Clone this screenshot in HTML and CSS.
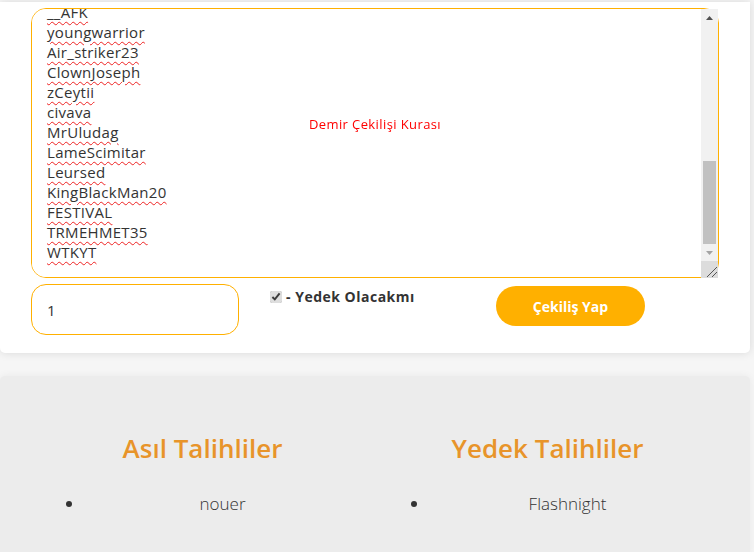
FILE: index.html
```html
<!DOCTYPE html>
<html lang="tr">
<head>
    <meta charset="UTF-8">
    <meta name="viewport" content="width=device-width, initial-scale=1.0">
    <title>Çekiliş</title>
    <link rel="stylesheet" href="styles.css">
</head>
<body>
    <div class="draw-card">
        <div class="pool">
            <textarea id="names" class="names" spellcheck="false">Kaanbey
EfeCan07
xSerhatTR
BlackWolf
Dragon_Slayer
MertKral
Ahmet_34
TheKing55
Sultan_Hero
Cozmo
ArdaPlays
nouer
Flashnight
ZeynepYT
Barisss
kuzeykurt
Yusuf_61
NightHawk
CrazyFox
Emirhan16
RedBlade
__AFK
youngwarrior
Air_striker23
ClownJoseph
zCeytii
civava
MrUludag
LameScimitar
Leursed
KingBlackMan20
FESTIVAL
TRMEHMET35
WTKYT</textarea>
            <span class="pool-title">Demir Çekilişi Kurası</span>
            <!-- scrollbar drawn by hand -->
            <div class="scrollbar">
                <div class="sb-btn">
                    <svg width="7" height="4" viewBox="0 0 7 4"><polygon points="0,4 3.5,0 7,4" fill="#505050"/></svg>
                </div>
                <div class="sb-track">
                    <div class="sb-thumb"></div>
                </div>
                <div class="sb-btn">
                    <svg width="7" height="4" viewBox="0 0 7 4"><polygon points="0,0 7,0 3.5,4" fill="#a3a3a3"/></svg>
                </div>
                <div class="sb-resize">
                    <svg width="17" height="17" viewBox="0 0 17 17"><path d="M6 16 L16 6 M11 16 L16 11" stroke="#555" stroke-width="1" fill="none"/></svg>
                </div>
            </div>
        </div>
        <div class="controls">
            <div class="control">
                <input type="text" class="count" value="1">
            </div>
            <div class="control">
                <label class="backup">
                    <input type="checkbox" checked> - Yedek Olacakmı
                </label>
            </div>
            <div class="control">
                <button class="draw-btn">Çekiliş Yap</button>
            </div>
        </div>
    </div>

    <div class="results">
        <div class="result-col">
            <h2>Asıl Talihliler</h2>
            <ul>
                <li>nouer</li>
            </ul>
        </div>
        <div class="result-col">
            <h2>Yedek Talihliler</h2>
            <ul>
                <li>Flashnight</li>
            </ul>
        </div>
    </div>

    <script src="script.js"></script>
</body>
</html>
```

FILE: styles.css
```css
body {
    margin: 0;
    background-color: #f6f6f6;
    font-family: "Open Sans", "Liberation Sans", sans-serif;
    color: #333;
}
.draw-card {
    width: 750px;
    box-sizing: border-box;
    margin-top: 2px;
    padding: 6px 31px 18px 31px;
    background: #fff;
    border-radius: 0 0 5px 5px;
    box-shadow: 0 0 10px rgba(0, 0, 0, 0.12);
}
.pool {
    position: relative;
}
.names {
    display: block;
    width: 100%;
    height: 270px;
    box-sizing: border-box;
    padding: 15px;
    border: 1px solid #ffb000;
    border-radius: 15px;
    outline: none;
    resize: none;
    overflow-y: auto;
    font-family: "Open Sans", sans-serif;
    font-size: 15px;
    line-height: 20px;
    letter-spacing: 0.3px;
    color: #333;
    text-decoration: underline wavy #e22;
    text-decoration-thickness: 1px;
    text-underline-offset: 3px;
}
.scrollbar {
    position: absolute;
    top: 1px;
    right: 1px;
    bottom: 0;
    width: 17px;
    display: flex;
    flex-direction: column;
    background: #f1f1f1;
}
.sb-btn {
    height: 17px;
    display: flex;
    align-items: center;
    justify-content: center;
}
.sb-btn svg {
    display: block;
}
.sb-track {
    flex: 1;
    padding: 135px 2px 0 2px;
}
.sb-thumb {
    height: 83px;
    background: #c1c1c1;
}
.sb-resize {
    height: 17px;
    background: #dcdcdc;
}
.sb-resize svg {
    display: block;
}
.pool-title {
    position: absolute;
    top: 107px;
    left: 0;
    right: 0;
    text-align: center;
    font-family: "Open Sans", sans-serif;
    font-size: 13px;
    letter-spacing: 0.4px;
    color: #f00;
    pointer-events: none;
}
.controls {
    display: grid;
    grid-template-columns: 239px 226px 1fr;
    margin-top: 6px;
}
.count {
    width: 208px;
    height: 51px;
    box-sizing: border-box;
    padding: 0 15px;
    border: 1px solid #ffb000;
    border-radius: 15px;
    outline: none;
    font-family: "Open Sans", sans-serif;
    font-size: 15px;
    color: #333;
}
.backup {
    display: flex;
    align-items: center;
    gap: 4px;
    margin-top: 3px;
    font-size: 14px;
    font-weight: 700;
    letter-spacing: 0.5px;
    color: #333;
}
.backup input {
    margin: 0;
    width: 12px;
    height: 12px;
    accent-color: #dedede;
}
.draw-btn {
    width: 149px;
    height: 40px;
    margin-top: 2px;
    border: none;
    border-radius: 20px;
    background-color: #ffb000;
    color: #fff;
    font-family: "Open Sans", sans-serif;
    font-size: 14px;
    font-weight: 700;
    cursor: pointer;
}
.results {
    display: grid;
    grid-template-columns: 1fr 1fr;
    width: 750px;
    box-sizing: border-box;
    margin-top: 23px;
    padding: 40px 30px 40px 30px;
    background: #ececec;
    border-radius: 5px 5px 0 0;
    box-shadow: 0 0 8px rgba(0, 0, 0, 0.06);
}
.result-col {
    padding: 0 15px;
    text-align: center;
}
.result-col h2 {
    margin: 14px 0 0;
    font-size: 26px;
    font-weight: 600;
    color: #e8942a;
}
.result-col ul {
    margin: 26px 0 0;
    padding-left: 40px;
    text-align: center;
}
.result-col li {
    font-size: 17px;
    font-weight: 300;
    color: #333;
}
```

FILE: script.js
```js
const names = document.getElementById('names');
names.scrollTop = names.scrollHeight;
```
